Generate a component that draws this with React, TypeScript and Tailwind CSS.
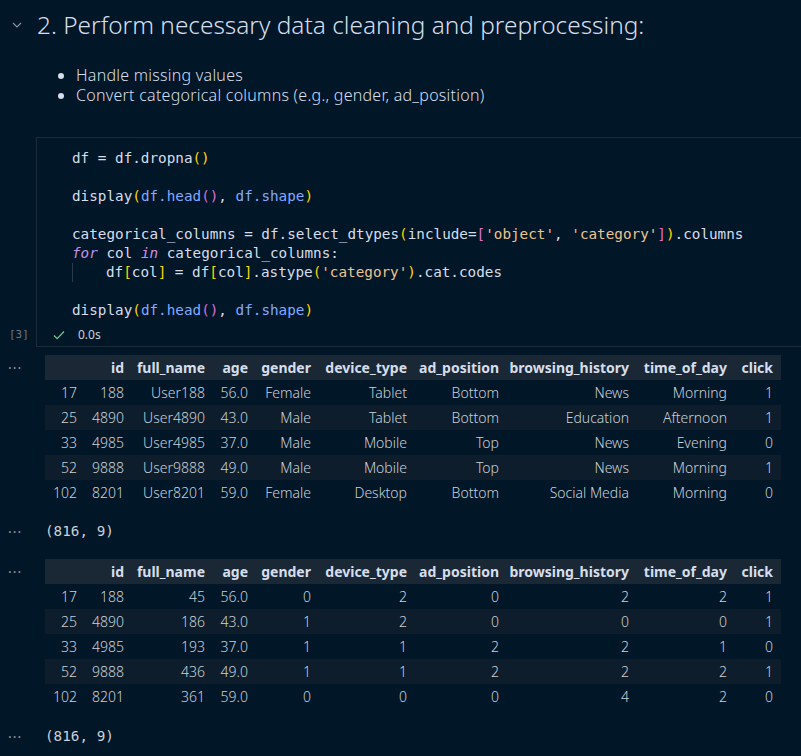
import React from "react";

const ui = { fontFamily: '"Noto Sans", "Open Sans", sans-serif' };
const mono = { fontFamily: '"DejaVu Sans Mono", "Liberation Mono", monospace' };

const cols = ["", "id", "full_name", "age", "gender", "device_type", "ad_position", "browsing_history", "time_of_day", "click"];
const widths = ["w-[40px]", "w-[47px]", "w-[81px]", "w-[43px]", "w-[63px]", "w-[96px]", "w-[92px]", "w-[130px]", "w-[98px]", "w-[46px]"];

const rows1 = [
  ["17", "188", "User188", "56.0", "Female", "Tablet", "Bottom", "News", "Morning", "1"],
  ["25", "4890", "User4890", "43.0", "Male", "Tablet", "Bottom", "Education", "Afternoon", "1"],
  ["33", "4985", "User4985", "37.0", "Male", "Mobile", "Top", "News", "Evening", "0"],
  ["52", "9888", "User9888", "49.0", "Male", "Mobile", "Top", "News", "Morning", "1"],
  ["102", "8201", "User8201", "59.0", "Female", "Desktop", "Bottom", "Social Media", "Morning", "0"],
];

const rows2 = [
  ["17", "188", "45", "56.0", "0", "2", "0", "2", "2", "1"],
  ["25", "4890", "186", "43.0", "1", "2", "0", "0", "0", "1"],
  ["33", "4985", "193", "37.0", "1", "1", "2", "2", "1", "0"],
  ["52", "9888", "436", "49.0", "1", "1", "2", "2", "2", "1"],
  ["102", "8201", "361", "59.0", "0", "0", "0", "4", "2", "0"],
];

function Dots() {
  return <div className="w-[45px] shrink-0 pl-[8px] text-[#8a96a3] text-[14px] leading-none tracking-[1px]">···</div>;
}

function DataTable({ rows }: { rows: string[][] }) {
  return (
    <table className="table-fixed border-collapse text-[14px] text-[#c9d1d9]" style={ui}>
      <thead>
        <tr className="bg-[#1a2836] h-[25px]">
          {cols.map((c, i) => (
            <th key={i} className={`${widths[i]} pr-[8px] text-right font-bold text-[#d6deeb]`}>{c}</th>
          ))}
        </tr>
      </thead>
      <tbody>
        {rows.map((r, ri) => (
          <tr key={ri} className={`h-[25px] ${ri % 2 === 1 ? "bg-[#0d1d2b]" : ""}`}>
            {r.map((v, i) => (
              <td key={i} className="pr-[8px] text-right font-light">{v}</td>
            ))}
          </tr>
        ))}
      </tbody>
    </table>
  );
}

const B1 = "text-[#ffd700]";
const B2 = "text-[#da70d6]";
const S = "text-[#ecc48d]";
const F = "text-[#82aaff]";
const V = "text-[#d6deeb]";
const K = "text-[#c792ea] italic";

export default function App() {
  return (
    <div className="min-h-[756px] w-[801px] overflow-hidden bg-[#011627] text-[#d6deeb]" style={ui}>
      {/* markdown cell */}
      <div className="flex items-center pt-[5px] h-[45px]">
        <svg className="ml-[12px] mr-[15px]" width="10" height="6" viewBox="0 0 10 6" fill="none">
          <path d="M1 1l4 4 4-4" stroke="#8a96a3" strokeWidth="1.1" />
        </svg>
        <h2 className="text-[24.4px] font-light text-[#d6deeb]">2. Perform necessary data cleaning and preprocessing:</h2>
      </div>
      <ul className="mt-[20px] ml-[76px] list-disc text-[16px] font-light leading-[20px] text-[#d6deeb] tracking-[0.25px]">
        <li>Handle missing values</li>
        <li>Convert categorical columns (e.g., gender, ad_position)</li>
      </ul>

      {/* code cell */}
      <div className="mt-[32px] relative">
        <div className="ml-[36px] border border-[#1c2b3a] border-r-0 pt-[11px]">
          <pre className="pl-[35px] text-[14.3px] leading-[19px]" style={mono}>
            <div className={V}>df = df.dropna<span className={B1}>()</span></div>
            <div>&nbsp;</div>
            <div className={V}>display<span className={B1}>(</span><span className={F}>df.head</span><span className={B2}>()</span>, <span className={F}>df.shape</span><span className={B1}>)</span></div>
            <div>&nbsp;</div>
            <div className={V}>categorical_columns = df.select_dtypes<span className={B1}>(</span>include=<span className={B2}>[</span><span className={S}>'object'</span>, <span className={S}>'category'</span><span className={B2}>]</span><span className={B1}>)</span>.columns</div>
            <div className={V}><span className={K}>for</span> col <span className={K}>in</span> categorical_columns:</div>
            <div className={`${V} flex`}><span className="border-l border-[#2b3b4b] w-[34px] shrink-0"></span>df<span className={B1}>[</span>col<span className={B1}>]</span> = df<span className={B1}>[</span>col<span className={B1}>]</span>.astype<span className={B1}>(</span><span className={S}>'category'</span><span className={B1}>)</span>.cat.codes</div>
            <div>&nbsp;</div>
            <div className={V}>display<span className={B1}>(</span><span className={F}>df.head</span><span className={B2}>()</span>, <span className={F}>df.shape</span><span className={B1}>)</span></div>
          </pre>
          <div className="flex items-center h-[22px] mt-[4px] pl-[16px] text-[12px] text-[#c9d1d9]">
            <svg width="12" height="10" viewBox="0 0 12 10" fill="none">
              <path d="M1 5.5l3.2 3.2L11 1.5" stroke="#73c991" strokeWidth="1.2" />
            </svg>
            <span className="ml-[13px]">0.0s</span>
          </div>
        </div>
        <div className="absolute left-[9px] bottom-[4px] text-[11px] text-[#6b7785]" style={mono}>[3]</div>
      </div>

      {/* outputs */}
      <div className="mt-[8px] flex items-start">
        <div className="pt-[6px]"><Dots /></div>
        <DataTable rows={rows1} />
      </div>
      <div className="mt-[17px] flex items-center h-[20px]">
        <Dots />
        <span className="text-[14.3px] text-[#c9d1d9]" style={mono}>(816, 9)</span>
      </div>
      <div className="mt-[17px] flex items-start">
        <div className="pt-[6px]"><Dots /></div>
        <DataTable rows={rows2} />
      </div>
      <div className="mt-[18px] flex items-center h-[20px]">
        <Dots />
        <span className="text-[14.3px] text-[#c9d1d9]" style={mono}>(816, 9)</span>
      </div>
    </div>
  );
}
